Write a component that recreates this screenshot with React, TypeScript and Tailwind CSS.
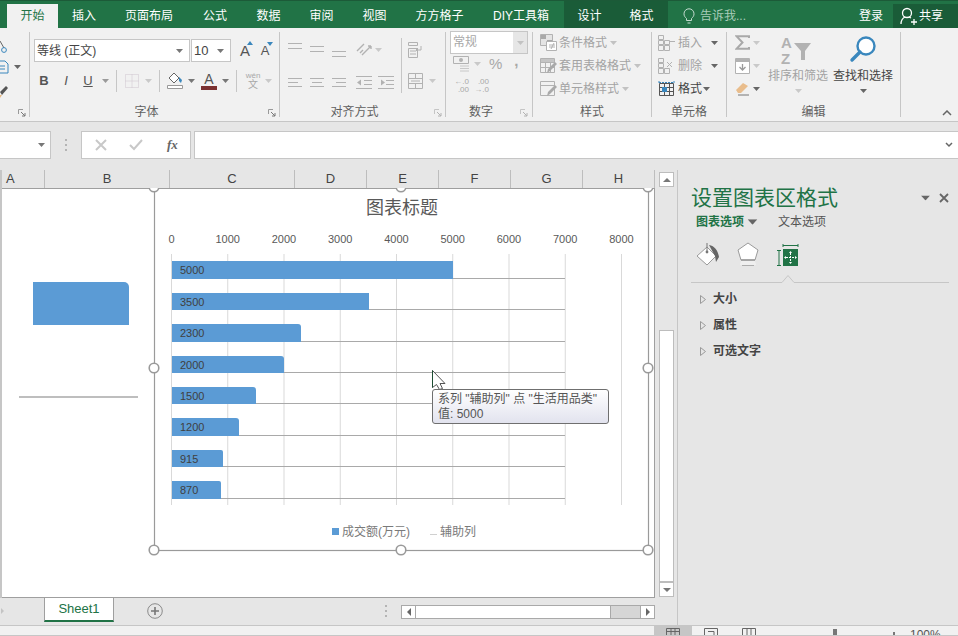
import type { ReactNode } from "react";

const GRAY = "#b2b2b2";

const tabs = [
  { label: "插入", w: "w-[52px]" },
  { label: "页面布局", w: "w-[78px]" },
  { label: "公式", w: "w-[54px]" },
  { label: "数据", w: "w-[53px]" },
  { label: "审阅", w: "w-[53px]" },
  { label: "视图", w: "w-[53px]" },
  { label: "方方格子", w: "w-[77px]" },
  { label: "DIY工具箱", w: "w-[86px]" },
];

const bars = [
  { value: 5000, y: 261, h: 18, end: 453, r: 0 },
  { value: 3500, y: 293, h: 17, end: 369, r: 0 },
  { value: 2300, y: 324, h: 18, end: 301, r: 3 },
  { value: 2000, y: 356, h: 17, end: 284, r: 3 },
  { value: 1500, y: 387, h: 17, end: 256, r: 3 },
  { value: 1200, y: 418, h: 18, end: 239, r: 3 },
  { value: 915, y: 450, h: 17, end: 223, r: 2 },
  { value: 870, y: 481, h: 18, end: 221, r: 2 },
];

const ticks = [0, 1000, 2000, 3000, 4000, 5000, 6000, 7000, 8000];
const handles = [
  [154, 187],
  [401, 187],
  [648, 187],
  [154, 368],
  [648, 368],
  [154, 550],
  [401, 550],
  [648, 550],
];

const columns = [
  { label: "A", w: "w-[43px]", cls: "justify-start pl-[4px]" },
  { label: "B", w: "w-[125px]", cls: "justify-center" },
  { label: "C", w: "w-[125px]", cls: "justify-center" },
  { label: "D", w: "w-[72px]", cls: "justify-center" },
  { label: "E", w: "w-[72px]", cls: "justify-center" },
  { label: "F", w: "w-[72px]", cls: "justify-center" },
  { label: "G", w: "w-[72px]", cls: "justify-center" },
  { label: "H", w: "w-[72px]", cls: "justify-center" },
];

function Caret({ className = "", color = "#9a9a9a" }: { className?: string; color?: string }) {
  return (
    <svg width="7" height="4" viewBox="0 0 7 4" className={`shrink-0 ${className}`}>
      <path d="M0 0h7L3.5 4z" fill={color} />
    </svg>
  );
}

function Launcher({ className = "" }: { className?: string }) {
  return (
    <svg width="8" height="8" viewBox="0 0 8 8" className={`absolute ${className}`}>
      <path d="M.5 5V.5H5" fill="none" stroke="#9a9a9a" />
      <path d="M3 3l4 4M7 4v3H4" fill="none" stroke="#777" />
    </svg>
  );
}

function Lines({ rows, h = 16, w = 14 }: { rows: number[][]; h?: number; w?: number }) {
  return (
    <svg width={w} height={h} viewBox={`0 0 ${w} ${h}`} className="shrink-0">
      {rows.map(([x1, x2, y], i) => (
        <path key={i} d={`M${x1} ${y + 0.5}H${x2}`} stroke={GRAY} />
      ))}
    </svg>
  );
}

function Sep({ className = "" }: { className?: string }) {
  return <div className={`w-px shrink-0 bg-[#c6c6c6] ${className}`} />;
}

function Group({ label, w, labelCls = "", children }: { label?: string; w: string; labelCls?: string; children: ReactNode }) {
  return (
    <div className={`relative mt-[4px] flex h-[85px] shrink-0 flex-col border-r border-[#c6c6c6] ${w}`}>
      <div className="h-[72px] shrink-0">{children}</div>
      {label && (
        <div className={`h-[16px] shrink-0 text-center text-[12px] leading-[16px] text-[#5f5f5f] ${labelCls}`}>{label}</div>
      )}
    </div>
  );
}

function GridIcon({ dark = false, fill }: { dark?: boolean; fill?: boolean }) {
  const c = dark ? "#555" : GRAY;
  return (
    <svg width="17" height="16" viewBox="0 0 17 16" className="shrink-0">
      <path d="M1.5 2.5h14v12h-14zM1.5 6.5h14M1.5 10.5h14M6.5 2.5v12M11.5 2.5v12" fill="none" stroke={c} />
      <path d="M1 0v3M16 0v3M1 1.500h15" stroke="#3a87bd" fill="none" strokeDasharray="2 1" />
      {fill && <rect x="4" y="6" width="5" height="5" fill="#3a87bd" />}
    </svg>
  );
}

function StyleRow({ text, icon, caretGap }: { text: string; icon: ReactNode; caretGap: string }) {
  return (
    <div className="flex h-[23px] items-center pl-[7px]">
      {icon}
      <span className="ml-[2px] text-[12px] text-[#a3a3a3]">{text}</span>
      <Caret className={caretGap} color="#c2c2c2" />
    </div>
  );
}

function CellRow({ text, icon, dark = false, caretGap }: { text: string; icon: ReactNode; dark?: boolean; caretGap: string }) {
  return (
    <div className="flex h-[23px] items-center pl-[6px]">
      {icon}
      <span className={`ml-[3px] text-[12px] ${dark ? "text-[#444]" : "text-[#a3a3a3]"}`}>{text}</span>
      <Caret className={caretGap} color="#666" />
    </div>
  );
}

function Ribbon() {
  return (
    <div className="relative flex h-[94px] shrink-0 border-b border-[#c6c6c6] bg-[#f1f1f1]">
      {/* 剪贴板 */}
      <Group w="w-[30px]">
        <svg width="20" height="60" viewBox="0 0 20 60" className="mt-[7px]">
          <path d="M0 2l4 7" stroke="#666" fill="none" />
          <circle cx="4" cy="11" r="2.4" fill="none" stroke="#3a87bd" />
          <path d="M-2 22h7l3 3v9H-2zM0 27h5M0 30h5" fill="none" stroke="#3a87bd" />
          <path d="M0 53l6-6 2 2-6 7z" fill="#555" />
          <path d="M0 56l2 0-2 3z" fill="#e8b77f" />
        </svg>
        <Caret className="absolute left-[14px] top-[33px]" color="#666" />
        <Launcher className="left-[18px] top-[77px]" />
      </Group>

      {/* 字体 */}
      <Group label="字体" w="w-[250px]" labelCls="pr-[16px]">
        <Launcher className="right-[3px] top-[77px]" />
        <div className="ml-[4px] mt-[7px] flex h-[23px] items-center">
          <div className="flex h-full w-[156px] items-center justify-between border border-[#c6c6c6] bg-white pl-[2px] pr-[6px] text-[12px] text-[#444]">
            <span>等线 (正文)</span>
            <Caret color="#777" />
          </div>
          <div className="ml-px flex h-full w-[40px] items-center justify-between border border-[#c6c6c6] bg-white pl-[2px] pr-[6px] text-[13px] text-[#444]">
            <span>10</span>
            <Caret color="#777" />
          </div>
          <div className="relative ml-[7px] flex w-[14px] justify-center text-[15px] leading-none text-[#555]">
            A
            <svg width="6" height="4" viewBox="0 0 6 4" className="absolute -right-[1px] -top-[2px]">
              <path d="M0 4h6L3 0z" fill="#3a87bd" />
            </svg>
          </div>
          <div className="relative ml-[7px] flex w-[12px] justify-center text-[13px] leading-none text-[#555]">
            A
            <svg width="6" height="4" viewBox="0 0 6 4" className="absolute -right-[2px] -top-[2px]">
              <path d="M0 0h6L3 4z" fill="#3a87bd" />
            </svg>
          </div>
        </div>
        <div className="ml-[4px] mt-[7px] flex h-[23px] items-center">
          <span className="w-[20px] text-center text-[13px] font-bold text-[#555]">B</span>
          <span className="ml-[2px] w-[20px] text-center text-[13px] italic text-[#555]">I</span>
          <span className="ml-[2px] w-[20px] text-center text-[13px] text-[#555] underline">U</span>
          <Caret className="ml-[4px]" />
          <Sep className="ml-[7px] h-[22px]" />
          <svg width="14" height="14" viewBox="0 0 14 14" className="ml-[8px] shrink-0">
            <path d="M.5.5h13v13H.5z" fill="none" stroke="#cfc4cf" strokeDasharray="1 1" />
            <path d="M7 .5v13M.5 7h13" stroke="#cfc4cf" strokeDasharray="1 1" />
          </svg>
          <Caret className="ml-[6px]" color="#c9c9c9" />
          <Sep className="ml-[7px] h-[22px]" />
          <svg width="16" height="18" viewBox="0 0 16 18" className="ml-[7px] shrink-0">
            <path d="M7 1l5 5-5 5-5-5z" fill="#fff" stroke="#666" />
            <path d="M12 5l3 3-1 3-2-2z" fill="#3a87bd" />
            <path d="M.5 13.5h15v3H.5z" fill="#fff" stroke="#999" />
          </svg>
          <Caret className="ml-[5px]" color="#777" />
          <div className="ml-[6px] flex w-[16px] flex-col items-center text-[14px] leading-[14px] text-[#555]">
            A
            <div className="h-[4px] w-[16px] bg-[#7a3030]" />
          </div>
          <Caret className="ml-[5px]" color="#777" />
          <Sep className="ml-[7px] h-[22px]" />
          <div className="ml-[8px] flex w-[16px] flex-col items-center text-[8px] leading-[9px] text-[#a8a8a8]">
            <span>wén</span>
            <span className="text-[10px] leading-[10px]">文</span>
          </div>
          <Caret className="ml-[4px]" color="#c9c9c9" />
        </div>
      </Group>

      {/* 对齐方式 */}
      <Group label="对齐方式" w="w-[166px]" labelCls="pr-[16px]">
        <Launcher className="right-[3px] top-[77px] opacity-50" />
        <div className="flex">
          <div className="w-[121px] shrink-0 pl-[8px]">
            <div className="mt-[10px] flex h-[16px] items-center">
              <div className="flex gap-[8px]">
                <Lines rows={[[0, 14, 1], [0, 14, 6]]} />
                <Lines rows={[[0, 14, 4], [0, 14, 9]]} />
                <Lines rows={[[0, 14, 9], [0, 14, 14]]} />
              </div>
              <svg width="16" height="16" viewBox="0 0 16 16" className="ml-[10px] shrink-0">
                <path d="M1 9l7-7M4 11l3-3M6 13L15 4M15 4h-3M15 4v3" fill="none" stroke={GRAY} strokeWidth="1.4" />
              </svg>
              <Caret className="ml-[3px]" color="#c9c9c9" />
            </div>
            <div className="mt-[17px] flex h-[16px] items-center">
              <div className="flex gap-[8px]">
                <Lines rows={[[0, 14, 3], [0, 10, 7], [0, 14, 11]]} />
                <Lines rows={[[0, 14, 3], [2, 12, 7], [0, 14, 11]]} />
                <Lines rows={[[0, 14, 3], [4, 14, 7], [0, 14, 11]]} />
              </div>
              <svg width="16" height="16" viewBox="0 0 16 16" className="ml-[10px] shrink-0">
                <path d="M0 1.5h16M8 5.5h8M8 9.5h8M0 13.5h16" stroke={GRAY} />
                <path d="M1 7.5l4-3v6z" fill={GRAY} />
              </svg>
              <svg width="16" height="16" viewBox="0 0 16 16" className="ml-[6px] shrink-0">
                <path d="M0 1.5h16M8 5.5h8M8 9.5h8M0 13.5h16" stroke={GRAY} />
                <path d="M7 7.5l-4-3v6z" fill={GRAY} />
              </svg>
            </div>
          </div>
          <Sep className="mt-[6px] h-[55px]" />
          <div className="pl-[6px]">
            <svg width="16" height="16" viewBox="0 0 16 16" className="mt-[10px] block">
              <path d="M.5.5h9v3h-9zM.5 6.5h9v9h-9zM2 9h6M2 12h6M13 4v4H8M10 6L8 8l2 2" fill="none" stroke={GRAY} />
            </svg>
            <div className="mt-[15px] flex items-center">
              <svg width="15" height="16" viewBox="0 0 15 16" className="shrink-0">
                <path d="M.5.5h14v15H.5zM.5 5.5h14M.5 10.5h14M7.5.5v5M7.5 10.5v5M3 8h9" fill="none" stroke={GRAY} />
              </svg>
              <Caret className="ml-[6px]" color="#c9c9c9" />
            </div>
          </div>
        </div>
      </Group>

      {/* 数字 */}
      <Group label="数字" w="w-[87px]" labelCls="pr-[16px]">
        <Launcher className="right-[4px] top-[77px] opacity-50" />
        <div className="ml-[4px] -mt-px flex h-[23px] w-[78px] border border-[#c6c6c6] bg-white">
          <span className="flex-1 pl-[2px] text-[12px] leading-[21px] text-[#a8a8a8]">常规</span>
          <div className="flex w-[14px] items-center justify-center bg-[#e6e6e6]">
            <Caret color="#c2c2c2" />
          </div>
        </div>
        <div className="flex h-[19px] items-center pl-[7px]">
          <svg width="17" height="17" viewBox="0 0 17 17" className="shrink-0">
            <path d="M.5 1.5h15v7h-15z" fill="none" stroke={GRAY} />
            <circle cx="8" cy="5" r="2" fill={GRAY} />
            <path d="M7 11h9M7 13.5h9M7 16h9" stroke="#c8c8c8" />
          </svg>
          <Caret className="ml-[4px]" color="#c9c9c9" />
          <span className="ml-[8px] text-[15px] leading-none text-[#a8a8a8]">%</span>
          <span className="ml-[12px] -mt-[6px] text-[15px] font-bold leading-none text-[#a8a8a8]">,</span>
        </div>
        <div className="mt-[3px] flex h-[19px] items-center pl-[7px] font-['Liberation_Sans',sans-serif] text-[8px] leading-[8px] text-[#a8a8a8]">
          <div className="flex w-[16px] flex-col items-end">
            <span>←.0</span>
            <span>.00</span>
          </div>
          <div className="ml-[6px] flex w-[14px] flex-col items-end">
            <span>.00</span>
            <span>→.0</span>
          </div>
        </div>
      </Group>

      {/* 样式 */}
      <Group label="样式" w="w-[119px]">
        <div className="-mt-px">
          <StyleRow
            text="条件格式"
            caretGap="ml-[3px]"
            icon={
              <svg width="17" height="17" viewBox="0 0 17 17" className="shrink-0">
                <path d="M.5.5h12v11H.5z" fill="#e4e4e4" stroke={GRAY} />
                <path d="M1 1h5v4H1zM7 6h5v5H7z" fill="#a9a9a9" />
                <path d="M6.5 7.5h10v9h-10z" fill="#fff" stroke={GRAY} />
                <path d="M9 11h6M9 13h6M14 9l-3 6" stroke={GRAY} />
              </svg>
            }
          />
          <StyleRow
            text="套用表格格式"
            caretGap="ml-[3px]"
            icon={
              <svg width="17" height="17" viewBox="0 0 17 17" className="shrink-0">
                <path d="M.5 1.5h14v14H.5zM.5 5.5h14M.5 10.5h14M5.5 1.5v14M10.5 1.5v14" fill="none" stroke={GRAY} />
                <path d="M1 2h13v3H1z" fill="#c4c4c4" />
                <path d="M15 5l2 2-7 7-3 2 1-4z" fill="#a9a9a9" />
              </svg>
            }
          />
          <StyleRow
            text="单元格样式"
            caretGap="ml-[3px]"
            icon={
              <svg width="17" height="17" viewBox="0 0 17 17" className="shrink-0">
                <path d="M.5 1.5h14v14H.5zM.5 5.5h14" fill="none" stroke={GRAY} />
                <path d="M15 5l2 2-7 7-3 2 1-4z" fill="#a9a9a9" />
              </svg>
            }
          />
        </div>
      </Group>

      {/* 单元格 */}
      <Group label="单元格" w="w-[75px]">
        <div className="-mt-px">
          <CellRow
            text="插入"
            caretGap="ml-[9px]"
            icon={
              <svg width="17" height="16" viewBox="0 0 17 16" className="shrink-0">
                <path d="M.5.5h5v4h-5zM6.5 5.5h5v4h-5zM.5 10.5h5v5h-5zM6.5 10.5h5v5h-5zM.5 5.5h5v4h-5zM12 6.5h5" fill="none" stroke={GRAY} />
              </svg>
            }
          />
          <CellRow
            text="删除"
            caretGap="ml-[9px]"
            icon={
              <svg width="17" height="16" viewBox="0 0 17 16" className="shrink-0">
                <path d="M.5.5h5v4h-5zM.5 5.5h5v4h-5zM.5 10.5h5v5h-5zM6.5 10.5h5v5h-5zM9 4l5 5M14 4l-5 5" fill="none" stroke={GRAY} />
              </svg>
            }
          />
          <CellRow text="格式" dark caretGap="ml-[1px]" icon={<GridIcon dark fill />} />
        </div>
      </Group>

      {/* 编辑 */}
      <Group label="编辑" w="w-[174px]">
        <div className="flex">
          <div className="w-[41px] shrink-0 pl-[8px]">
            <div className="-mt-px flex h-[23px] items-center">
              <svg width="15" height="15" viewBox="0 0 15 15" className="shrink-0">
                <path d="M14 3V1.200H1.500L7.500 7.500 1.500 13.800H14V12" fill="none" stroke="#a9a9a9" strokeWidth="2" />
              </svg>
              <Caret className="ml-[3px]" color="#c9c9c9" />
            </div>
            <div className="flex h-[23px] items-center">
              <svg width="15" height="16" viewBox="0 0 15 16" className="shrink-0">
                <path d="M.5.5h14v15H.5z" fill="#fff" stroke={GRAY} />
                <path d="M1 1h13v3H1z" fill={GRAY} />
                <path d="M7.5 6v6M4.5 9l3 3 3-3" fill="none" stroke="#9a9a9a" strokeWidth="1.3" />
              </svg>
              <Caret className="ml-[3px]" color="#c9c9c9" />
            </div>
            <div className="flex h-[23px] items-center">
              <svg width="15" height="15" viewBox="0 0 15 15" className="shrink-0">
                <path d="M1 9l7-7 5 3-7 7H3z" fill="#e9bd8c" />
                <path d="M3 14h11" stroke="#777" />
              </svg>
              <Caret className="ml-[3px]" color="#666" />
            </div>
          </div>
          <div className="flex w-[60px] shrink-0 flex-col items-center">
            <div className="relative h-[34px] w-[40px] font-['Liberation_Sans',sans-serif] text-[15px] font-bold leading-[14px] text-[#b2b2b2]">
              <span className="absolute left-[3px] top-[4px]">A</span>
              <span className="absolute left-[3px] top-[20px]">Z</span>
              <svg width="18" height="18" viewBox="0 0 18 18" className="absolute left-[16px] top-[11px]">
                <path d="M0 0h17L11 8v9H7V8z" fill="#b2b2b2" />
              </svg>
            </div>
            <span className="mt-[2px] whitespace-nowrap text-[12px] leading-[16px] text-[#a3a3a3]">排序和筛选</span>
            <Caret className="mt-[5px]" color="#c9c9c9" />
          </div>
          <div className="ml-[5px] flex w-[60px] shrink-0 flex-col items-center">
            <svg width="28" height="31" viewBox="0 0 28 31" className="mt-[3px] block h-[31px] shrink-0">
              <circle cx="17" cy="11" r="8.5" fill="#fff" stroke="#3a87bd" strokeWidth="2.4" />
              <path d="M11 17L3 25" stroke="#3a87bd" strokeWidth="3.4" strokeLinecap="round" />
            </svg>
            <span className="mt-[2px] whitespace-nowrap text-[12px] leading-[16px] text-[#444]">查找和选择</span>
            <Caret className="mt-[5px]" color="#666" />
          </div>
        </div>
      </Group>

      <svg width="10" height="6" viewBox="0 0 10 6" className="absolute left-[942px] top-[82px]">
        <path d="M1 5l4-4 4 4" fill="none" stroke="#666" strokeWidth="1.5" />
      </svg>
    </div>
  );
}

function FormulaBar() {
  return (
    <div className="flex h-[48px] shrink-0 pt-[9px]">
      <div className="flex h-[28px] w-[51px] items-center justify-end border border-l-0 border-[#c6c6c6] bg-white pr-[5px]">
        <Caret color="#777" />
      </div>
      <div className="ml-[14px] mt-[8px] flex h-[12px] flex-col gap-[3px]">
        <div className="h-[2px] w-[2px] bg-[#b4b4b4]" />
        <div className="h-[2px] w-[2px] bg-[#b4b4b4]" />
        <div className="h-[2px] w-[2px] bg-[#b4b4b4]" />
      </div>
      <div className="ml-[14px] flex h-[28px] w-[110px] items-center border border-[#c6c6c6] bg-white">
        <svg width="12" height="12" viewBox="0 0 12 12" className="ml-[13px]">
          <path d="M1 1l10 10M11 1L1 11" stroke="#c8c8c8" strokeWidth="2" />
        </svg>
        <svg width="14" height="12" viewBox="0 0 14 12" className="ml-[22px]">
          <path d="M1 6l4 4 8-9" fill="none" stroke="#c8c8c8" strokeWidth="2" />
        </svg>
        <span className="ml-[24px] font-['Liberation_Serif',serif] text-[13px] font-bold italic text-[#666]">fx</span>
      </div>
      <div className="ml-[3px] flex h-[28px] flex-1 items-center justify-end border border-r-0 border-[#c6c6c6] bg-white pr-[5px]">
        <svg width="8" height="6" viewBox="0 0 8 6">
          <path d="M1 1l3 3 3-3" fill="none" stroke="#666" strokeWidth="1.5" />
        </svg>
      </div>
    </div>
  );
}

function Chart() {
  return (
    <svg
      width="660"
      height="372"
      viewBox="0 188 660 372"
      className="absolute left-0 top-[188px] font-['Liberation_Sans','Noto_Sans_CJK_SC',sans-serif]"
    >
      {/* 工作表上的形状 */}
      <path d="M33 282h91a5 5 0 0 1 5 5v38H33z" fill="#5b9bd5" />
      <path d="M19 397h119" stroke="#a9a9a9" strokeWidth="1.5" />

      <text x="402" y="214" textAnchor="middle" fontSize="18" fill="#595959">
        图表标题
      </text>
      {ticks.map((t, i) => {
        const x = 171.5 + i * 56.25;
        return (
          <g key={t}>
            <text x={x} y="243" textAnchor="middle" fontSize="11" fill="#595959">
              {t}
            </text>
            <path d={`M${x} 254V505`} stroke="#d9d9d9" />
          </g>
        );
      })}
      {bars.map((b) => (
        <g key={b.value}>
          <path d={`M${b.end} ${b.y + b.h - 0.5}H565`} stroke="#a9a9a9" />
          <path
            d={`M172 ${b.y}H${b.end - b.r}Q${b.end} ${b.y} ${b.end} ${b.y + b.r}V${b.y + b.h}H172z`}
            fill="#5b9bd5"
          />
          <text x="180" y={b.y + b.h / 2 + 4} fontSize="11" fill="#404040">
            {b.value}
          </text>
        </g>
      ))}
      <rect x="332" y="528" width="7" height="7" fill="#5b9bd5" />
      <text x="342" y="536" fontSize="12" fill="#7a7a7a">
        成交额(万元)
      </text>
      <path d="M430 534.5h7" stroke="#d0d0d0" />
      <text x="440" y="536" fontSize="12" fill="#7a7a7a">
        辅助列
      </text>

      <rect x="154.5" y="187.5" width="494" height="363" fill="none" stroke="#9a9a9a" strokeWidth="1.2" />
      {handles.map(([x, y]) => (
        <circle key={`${x}-${y}`} cx={x} cy={y} r="4.8" fill="#fff" stroke="#9a9a9a" strokeWidth="1.6" />
      ))}

      <path d="M432.5 370.5v17l4-3 3 5 3-1-2.500-5h5z" fill="#fff" stroke="#555" />
      <path d="M432.500 370.500v17" stroke="#1d4d33" />
    </svg>
  );
}

function Sheet() {
  return (
    <div className="flex w-[678px] shrink-0 flex-col border-r border-[#c6c6c6]">
      <div className="flex h-[428px] shrink-0">
        <div className="flex w-[655px] shrink-0 flex-col border-l-2 border-[#c6c6c6] border-r-0">
          <div className="flex h-[19px] shrink-0 border-b border-[#9f9f9f] font-['Liberation_Sans',sans-serif] text-[13px] leading-[18px] text-[#444]">
            {columns.map((c) => (
              <div key={c.label} className={`flex shrink-0 border-r border-[#bdbdbd] ${c.w} ${c.cls}`}>
                {c.label}
              </div>
            ))}
          </div>
          <div className="flex-1 border-b border-r border-[#9f9f9f] bg-white" />
        </div>
        <div className="ml-[4px] mt-[2px] flex w-[15px] shrink-0 flex-col">
          <div className="flex h-[15px] items-center justify-center border border-[#bdbdbd] bg-white">
            <svg width="8" height="4" viewBox="0 0 8 4">
              <path d="M0 4h8L4 0z" fill="#777" />
            </svg>
          </div>
          <div className="h-[143px]" />
          <div className="h-[252px] border border-[#bdbdbd] bg-white" />
          <div className="flex h-[15px] items-center justify-center border border-[#bdbdbd] bg-white">
            <svg width="8" height="4" viewBox="0 0 8 4">
              <path d="M0 0h8L4 4z" fill="#777" />
            </svg>
          </div>
        </div>
      </div>

      <div className="flex h-[27px] shrink-0 items-start">
        <svg width="4" height="6" viewBox="0 0 4 6" className="ml-[1px] mt-[10px]">
          <path d="M0 0l3 3-3 3z" fill="#c4c4c4" />
        </svg>
        <div className="ml-[39px] flex h-[24px] w-[70px] items-center justify-center border-b-2 border-x border-b-[#217346] border-x-[#9f9f9f] bg-white font-['Liberation_Sans',sans-serif] text-[13px] text-[#217346]">
          Sheet1
        </div>
        <svg width="16" height="16" viewBox="0 0 16 16" className="ml-[33px] mt-[5px]">
          <circle cx="8" cy="8" r="7.300" fill="none" stroke="#8a8a8a" />
          <path d="M4 8h8M8 4v8" stroke="#777" strokeWidth="1.600" />
        </svg>
        <div className="ml-[222px] mt-[7px] flex h-[12px] flex-col gap-[3px]">
          <div className="h-[2px] w-[2px] bg-[#b4b4b4]" />
          <div className="h-[2px] w-[2px] bg-[#b4b4b4]" />
          <div className="h-[2px] w-[2px] bg-[#b4b4b4]" />
        </div>
        <div className="ml-[14px] mt-[7px] flex h-[14px] w-[254px] border border-[#a9a9a9] bg-[#d6d6d6]">
          <div className="flex w-[14px] items-center justify-center border-r border-[#a9a9a9] bg-white">
            <svg width="4" height="8" viewBox="0 0 4 8">
              <path d="M4 0v8L0 4z" fill="#666" />
            </svg>
          </div>
          <div className="w-[195px] border-r border-[#a9a9a9] bg-white" />
          <div className="flex-1" />
          <div className="flex w-[14px] items-center justify-center border-l border-[#a9a9a9] bg-white">
            <svg width="4" height="8" viewBox="0 0 4 8">
              <path d="M0 0v8l4-4z" fill="#666" />
            </svg>
          </div>
        </div>
      </div>
    </div>
  );
}

function FormatPane() {
  return (
    <div className="flex-1 pl-[13px] pt-[14px]">
      <div className="flex h-[27px] items-center">
        <span className="whitespace-nowrap text-[21px] leading-[27px] text-[#217346]">设置图表区格式</span>
        <Caret className="ml-[84px] scale-[1.300]" color="#666" />
        <svg width="10" height="10" viewBox="0 0 10 10" className="ml-[10px]">
          <path d="M1 1l8 8M9 1L1 9" stroke="#666" strokeWidth="1.800" />
        </svg>
      </div>
      <div className="mt-[3px] flex h-[16px] items-center pl-[5px] text-[12px]">
        <span className="font-bold text-[#217346]">图表选项</span>
        <Caret className="ml-[5px] scale-[1.400]" color="#666" />
        <span className="ml-[22px] text-[#555]">文本选项</span>
      </div>
      <div className="mt-[7px] flex h-[34px] items-center pl-[5px]">
        <svg width="24" height="24" viewBox="0 0 24 24" className="shrink-0">
          <path d="M11 5l9 9-9 9-10-9z" fill="#fff" stroke="#9a9a9a" />
          <path d="M11 1v9" stroke="#777" />
          <circle cx="11" cy="10" r="1.400" fill="#777" />
          <path d="M13 3c6 1 9 6 10 12l-3 5-1-6z" fill="#666" />
        </svg>
        <svg width="22" height="24" viewBox="0 0 22 24" className="ml-[17px] shrink-0">
          <path d="M11 1l10 7-3 10H4L1 8z" fill="#fff" stroke="#9a9a9a" />
          <path d="M4 18h14M5 23h12" stroke="#9a9a9a" strokeWidth="1.500" />
          <path d="M4 19h14l1 4H3z" fill="#efefef" />
        </svg>
        <svg width="24" height="24" viewBox="0 0 24 24" className="ml-[17px] shrink-0">
          <path d="M7 3.500h15M7 2v3M22 2v3M1 8.500h4M1 23.500h4M3 8.500v15" fill="none" stroke="#217346" />
          <rect x="7" y="7" width="15" height="17" fill="#217346" />
          <path d="M14.500 11v9M10 15.500h9" stroke="#fff" strokeDasharray="2 1" />
          <path d="M13 11l1.500-2 1.500 2zM13 20l1.500 2 1.500-2zM10 14l-2 1.500 2 1.500zM19 14l2 1.500-2 1.500z" fill="#fff" />
        </svg>
      </div>
      <svg width="258" height="9" viewBox="0 0 258 9" className="mt-[4px] block">
        <path d="M0 7.500H91L97 .500l6 7H258" fill="none" stroke="#c6c6c6" />
      </svg>
      <div className="mt-[2px]">
        {["大小", "属性", "可选文字"].map((t) => (
          <div key={t} className="flex h-[26px] items-center pl-[9px]">
            <svg width="6" height="9" viewBox="0 0 6 9" className="shrink-0">
              <path d="M.5.500l5 4-5 4z" fill="none" stroke="#9a9a9a" />
            </svg>
            <span className="ml-[7px] text-[12px] font-bold text-[#444]">{t}</span>
          </div>
        ))}
      </div>
    </div>
  );
}

function StatusBar() {
  return (
    <div className="flex h-[11px] shrink-0 overflow-hidden border-y border-[#c6c6c6] bg-[#f1f1f1] pl-[654px]">
      <div className="flex h-full w-[38px] items-start justify-center bg-[#c6c6c6] pt-[2px]">
        <svg width="14" height="8" viewBox="0 0 14 8">
          <path d="M.5.500h13v7H.5zM.5 3.500h13M5 .500v7M9 .500v7" fill="none" stroke="#666" />
        </svg>
      </div>
      <svg width="14" height="8" viewBox="0 0 14 8" className="ml-[12px] mt-[2px]">
        <path d="M.5.500h13v7H.5zM4 3.500h6v4" fill="none" stroke="#666" />
      </svg>
      <svg width="14" height="8" viewBox="0 0 14 8" className="ml-[24px] mt-[2px]">
        <path d="M.5.500h13v7H.5zM5 .500v7M9 .500v7" fill="none" stroke="#666" />
      </svg>
      <div className="ml-[77px] mt-[3px] h-[6px] w-[4px] bg-[#777]" />
      <div className="ml-[56px] mt-[6px] h-[3px] w-[2px] bg-[#777]" />
      <span className="ml-[15px] mt-[2px] font-['Liberation_Sans',sans-serif] text-[12px] leading-[14px] text-[#555]">100%</span>
    </div>
  );
}

export default function App() {
  return (
    <div className="relative flex h-[636px] w-[958px] flex-col overflow-hidden bg-[#e6e6e6] font-['Liberation_Sans','Noto_Sans_CJK_SC',sans-serif]">
      <div className="flex h-[28px] shrink-0 items-end border-t border-[#1c5a38] bg-[#217346] text-[12px] text-white">
        <div className="ml-[7px] flex h-[24px] w-[51px] shrink-0 items-center justify-center bg-[#f1f1f1] text-[#217346]">开始</div>
        {tabs.map((t) => (
          <div key={t.label} className={`flex h-[24px] shrink-0 items-center justify-center ${t.w}`}>
            {t.label}
          </div>
        ))}
        <div className="flex h-[27px] shrink-0 bg-[#1a5c38]">
          <div className="flex w-[51px] items-center justify-center pt-[3px]">设计</div>
          <div className="flex w-[53px] items-center justify-center pt-[3px]">格式</div>
        </div>
        <div className="flex h-[24px] shrink-0 items-center whitespace-nowrap pl-[15px] text-[#a9cdb9]">
          <svg width="12" height="16" viewBox="0 0 12 16">
            <path d="M3.500 10.500C2 9 1 8 1 5.800a5 5 0 0 1 10 0C11 8 10 9 8.500 10.500v2h-5zM4.500 15h3" fill="none" stroke="#c5dcd0" />
          </svg>
          <span className="ml-[5px]">告诉我...</span>
        </div>
        <div className="flex h-[24px] flex-1 items-center justify-end pr-[10px]">登录</div>
        <div className="flex h-[24px] w-[65px] shrink-0 items-center bg-[#1a5c38] pl-[7px]">
          <svg width="17" height="18" viewBox="0 0 17 18" className="shrink-0">
            <circle cx="7" cy="6" r="4.500" fill="none" stroke="#fff" strokeWidth="1.300" />
            <path d="M1 17c0-4 2-6 4-7M9 10l2 1M11 15h6M14 12v6" fill="none" stroke="#fff" strokeWidth="1.300" />
          </svg>
          <span className="ml-[2px]">共享</span>
        </div>
      </div>

      <Ribbon />
      <FormulaBar />

      <div className="flex h-[455px] shrink-0">
        <Sheet />
        <FormatPane />
      </div>
      <StatusBar />

      <Chart />

      <div className="absolute left-[432px] top-[389px] h-[35px] w-[177px] rounded-[3px] border border-[#6f6f6f] bg-linear-to-b from-white to-[#e2e3ee] pl-[5px] pt-[2px] text-[12px] leading-[15px] text-[#555]">
        <div className="whitespace-nowrap">系列 "辅助列" 点 "生活用品类"</div>
        <div>值: 5000</div>
      </div>
    </div>
  );
}
